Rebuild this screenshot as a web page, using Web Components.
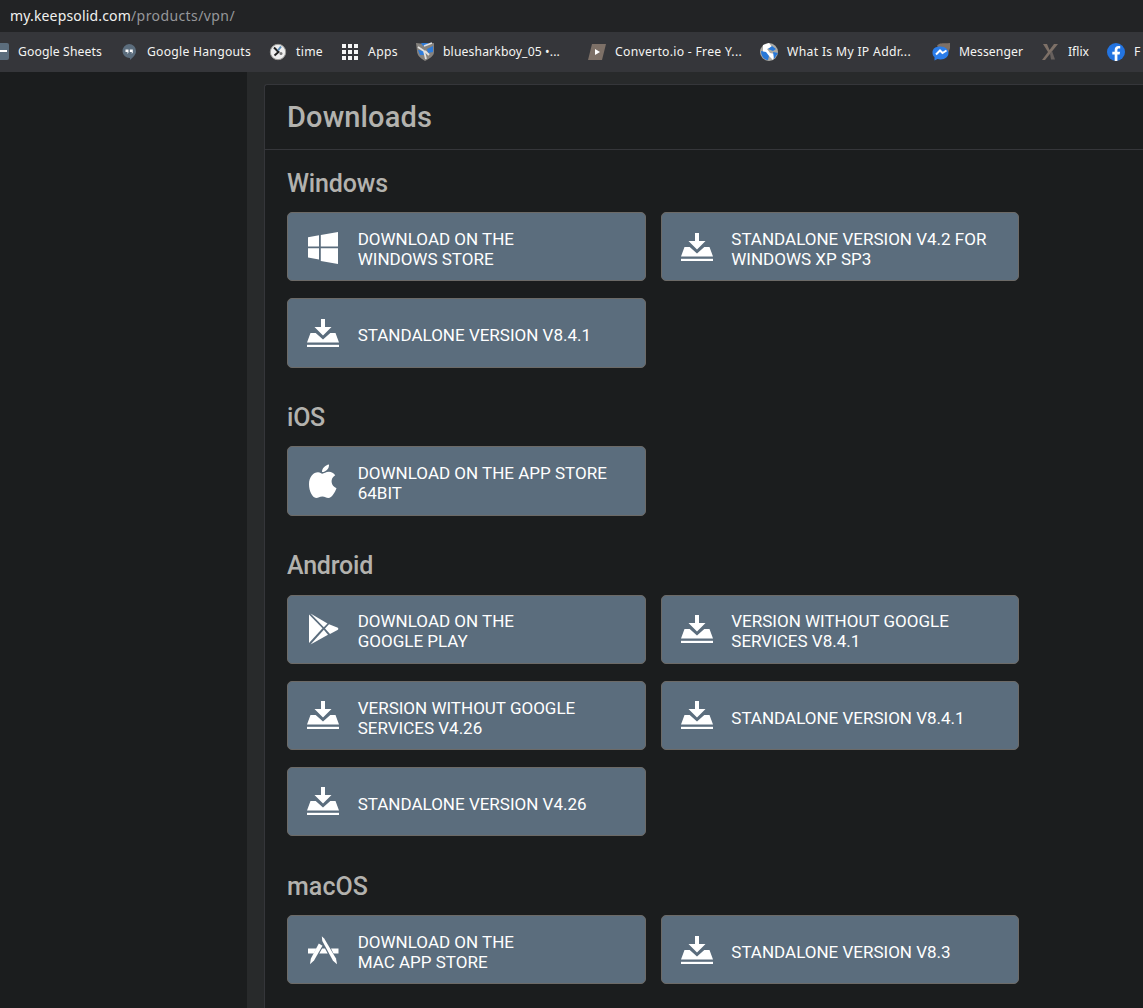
<!DOCTYPE html>
<html lang="en">
<head>
<meta charset="utf-8">
<title>Downloads</title>
<style>
html, body {
  margin: 0;
  height: 100%;
}
body {
  overflow: hidden;
  background: #1b1d1e;
  font-family: Roboto, "Liberation Sans", sans-serif;
}
</style>
</head>
<body>
<app-window></app-window>

<script>
const favicons = {
  sheets: '<rect x="1" y="1" width="17" height="17" rx="2" fill="#5b6d7d"/><path d="M5 9h11" stroke="#fff" stroke-width="2"/>',
  hangouts: '<path d="M9 2a7 7 0 0 1 7 7c0 4-3 6-6 9v-2a7 7 0 1 1-1-14z" fill="#5b6d7d"/><path d="M5.500 7.500h3v3l-1 1.500v-2h-2zM9.800 7.500h3v3l-1 1.500v-2h-2z" fill="#fff"/>',
  clock: '<circle cx="9" cy="10" r="7.700" fill="#eee" stroke="#9a9a96"/><path d="M5 5.500l4.500 4.500-4 3.500" fill="none" stroke="#222" stroke-width="2"/><path d="M9 8.500l3-4" stroke="#5b8db8" stroke-width="2"/><circle cx="12" cy="11.500" r="1.500" fill="#777"/>',
  apps: '<path d="M1 2h4v4H1zM7 2h4v4H7zM13 2h4v4h-4zM1 8h4v4H1zM7 8h4v4H7zM13 8h4v4h-4zM1 14h4v4H1zM7 14h4v4H7zM13 14h4v4h-4z" fill="#f5f5f5"/>',
  shield: '<path d="M0 1l9 1 9-1v9c0 4-4 6-9 9-5-3-8-6-8-10z" fill="#85827e"/><path d="M2 8l6 1v4H4zM11 7l6-3v6l-5 1zM5 1h7l-1 3H7z" fill="#2f7bd8"/><path d="M8 4l8-3M2 5l6 4 2 8M9 9l4 4" stroke="#e2e2e2" stroke-width="1.800" fill="none"/>',
  converto: '<path d="M4 2h14l-4 16H0z" fill="#7d7067"/><path d="M7 7l5 3-5 3z" fill="#fff"/>',
  globe: '<circle cx="9" cy="10" r="9" fill="#aaa9a4"/><path d="M3 3l6-2 3 4-5 2 3 4 5 1-2 6-4-4-6-4z" fill="#fff"/><path d="M1 9l5 1 3 4-1 4C4 18 1 14 1 9zM8 7l4-3 4 3-3 2zM13 10l5 1-4 6z" fill="#2878d8"/>',
  messenger: '<path d="M5 4c2-4 8-2 13-3 1 5-1 9-4 13z" fill="#7d7067"/><path d="M8.500 4.500c5 0 8 3 8 6.500s-3 6.500-8 6.500l-3-.5-3 1.500V15c-1.500-1-2-2.500-2-4.500 0-4 3-6 8-6z" fill="#2b7de9"/><path d="M4 12.500l4-4 2.500 2.500L14.500 8.500" fill="none" stroke="#fff" stroke-width="2"/>',
  iflix: '<path d="M2 2h4l2.500 6L13 2h4L4 18H1l6-8z" fill="#7d7067"/><path d="M9 11.500l2-2.500 3 8.500h-4z" fill="#67605d"/>',
  facebook: '<circle cx="9" cy="10" r="9" fill="#2374e1"/><path d="M7.700 19v-6.500H5.300V9.800h2.400V7.900c0-2.800 1.500-4 3.800-4l1.700.2v2.300h-1.300c-1.200 0-1.500.6-1.500 1.500v1.900h2.700l-.5 2.700h-2.200V19z" fill="#fff"/>'
};

const buttonIcons = {
  windows: '<path d="M2 7.300l11-2v11.200H2zM14.800 5L32 2v14.500H14.800zM2 18.300h11v11.200l-11-2zM14.800 18.300H32V34l-17.200-3z"/>',
  download: '<path d="M15 3h4v8h6.500L17 19.500 8.500 11H15z"/><path d="M4.500 17h5.200l7.300 6.500 7.300-6.500h5.200L33 26.500H1z"/><path d="M1 28.800h32v2.200H1z"/>',
  apple: '<path d="M23 .5c.3 3.500-2.500 7.500-7 7.600C15.700 4.500 19.200 1.100 23 .5z"/><path d="M16.300 9.700c1.600 0 3.600-1.900 6.600-1.900 2.500 0 4.900 1.300 6.300 3.500-5.500 3.200-4.500 10.700 1.300 12.900-1.500 4-4.600 9.600-8.100 9.700-2.500 0-3.300-1.500-6.100-1.500s-3.800 1.500-6.100 1.500C6.400 34 3 27 3 20.300c0-7.500 4.500-12 9-12 2.300 0 3.200 1.400 4.300 1.400z"/>',
  play: '<path d="M3 2.500L16.500 16.300 3 31z"/><path d="M4.500 1.500l17 10-3.700 3.700z"/><path d="M23 12.300l8.300 3.200a1.600 1.600 0 0 1 .2 2.600L24 22l-5-5.500z"/><path d="M17.800 17.800l4.200 5L4.500 32.500z"/>',
  appstore: '<path d="M2 15.500h8.500l-2.800 5H2zM13.300 20.500l2.800-5h2.900l2.700 5zM25 15.500h7.500v5h-5z"/><path d="M12.800 10.500l3.700 2.200L8 27.500l-4 3.700.8-5.500z"/><path d="M15.800 3.200l2.400 2.300L30 25.500l1 5.700-4-3.400L16.300 8z"/>'
};

// icon, label, label width, extra space after the item
const bookmarks = [
  ['sheets', 'Google Sheets', 84, 0],
  ['hangouts', 'Google Hangouts', 104, 0],
  ['clock', 'time', 27, 0],
  ['apps', 'Apps', 30, 0],
  ['shield', 'bluesharkboy_05 •...', 117, 10],
  ['converto', 'Converto.io - Free Y...', 127, 0],
  ['globe', 'What Is My IP Addr...', 124, 3],
  ['messenger', 'Messenger', 64, 0],
  ['iflix', 'Iflix', 21, 0],
  ['facebook', 'F', 7, 0]
];

const sections = [
  ['Windows', 101, [
    ['windows', 'Download on the<br>Windows Store'],
    ['download', 'Standalone version v4.2 for<br>Windows XP SP3'],
    ['download', 'Standalone version v8.4.1']
  ]],
  ['iOS', 38, [
    ['apple', 'Download on the App Store<br>64bit']
  ]],
  ['Android', 86, [
    ['play', 'Download on the<br>Google Play'],
    ['download', 'Version without Google<br>Services v8.4.1'],
    ['download', 'Version without Google<br>Services v4.26'],
    ['download', 'Standalone version v8.4.1'],
    ['download', 'Standalone version v4.26']
  ]],
  ['macOS', 81, [
    ['appstore', 'Download on the<br>Mac App Store'],
    ['download', 'Standalone version v8.3']
  ]]
];

// Text that spreads its letters to fill the width it is given
class FitText extends HTMLElement {
  constructor() {
    super();
    this.attachShadow({ mode: 'open' });
    this.shadowRoot.innerHTML = `
<style>
:host { display: block; white-space: nowrap; flex: none; }
span { display: inline-block; }
</style>
<span><slot></slot></span>`;
  }

  connectedCallback() {
    const width = Number(this.getAttribute('width'));
    const span = this.shadowRoot.querySelector('span');
    const natural = span.getBoundingClientRect().width;
    span.style.letterSpacing = `${(width - natural) / this.textContent.length}px`;
    this.style.width = `${width}px`;
  }
}
customElements.define('fit-text', FitText);

class AddressBar extends HTMLElement {
  constructor() {
    super();
    this.attachShadow({ mode: 'open' });
    this.shadowRoot.innerHTML = `
<style>
:host {
  display: flex;
  align-items: center;
  box-sizing: border-box;
  height: 32px;
  padding: 0 0 1px 10px;
  background: #222325;
  color: #f1f1ef;
  font: 14px/31px "Noto Sans", "Open Sans", sans-serif;
}
.path { color: #96979a; }
</style>
<fit-text width="121">my.keepsolid.com</fit-text>
<fit-text class="path" width="104">/products/vpn/</fit-text>`;
  }
}
customElements.define('address-bar', AddressBar);

class BookmarkItem extends HTMLElement {
  constructor() {
    super();
    this.attachShadow({ mode: 'open' });
  }

  connectedCallback() {
    this.shadowRoot.innerHTML = `
<style>
:host {
  display: flex;
  flex: none;
  align-items: center;
  gap: 9px;
}
svg { flex: none; width: 18px; height: 20px; }
</style>
<svg viewBox="0 0 18 20">${favicons[this.getAttribute('icon')]}</svg>
<slot></slot>`;
  }
}
customElements.define('bookmark-item', BookmarkItem);

class BookmarkBar extends HTMLElement {
  constructor() {
    super();
    this.attachShadow({ mode: 'open' });
  }

  connectedCallback() {
    this.shadowRoot.innerHTML = `
<style>
:host {
  display: flex;
  align-items: center;
  gap: 18px;
  height: 40px;
  margin-left: -9px;
  overflow: hidden;
  background: #35363a;
  color: #f4f4f2;
  font: 12.2px/20px "Noto Sans", "Open Sans", sans-serif;
}
</style>
${bookmarks.map(([icon, label, width, space]) => `
<bookmark-item icon="${icon}" style="margin-right: ${space}px">
  <fit-text width="${width}">${label}</fit-text>
</bookmark-item>`).join('')}`;
  }
}
customElements.define('bookmark-bar', BookmarkBar);

class DownloadButton extends HTMLElement {
  constructor() {
    super();
    this.attachShadow({ mode: 'open' });
  }

  connectedCallback() {
    this.shadowRoot.innerHTML = `
<style>
:host {
  display: flex;
  align-items: center;
  box-sizing: border-box;
  height: 69.4px;
  padding: 2px 18px 0;
  gap: 17.700px;
  border: 1px solid #6c6a67;
  border-radius: 5px;
  background: #5b6d7d;
  color: #fff;
  font-size: 17px;
  line-height: 20px;
  text-transform: uppercase;
  white-space: nowrap;
}
svg { flex: none; width: 34px; height: 36px; fill: #fff; }
div { padding-top: 2.500px; }
</style>
<svg viewBox="0 0 34 36">${buttonIcons[this.getAttribute('icon')]}</svg>
<div><slot></slot></div>`;
  }
}
customElements.define('download-button', DownloadButton);

class PlatformSection extends HTMLElement {
  constructor() {
    super();
    this.attachShadow({ mode: 'open' });
    this.shadowRoot.innerHTML = `
<style>
:host { display: block; padding-bottom: 34.600px; }
h2 {
  margin: 0 0 13.200px;
  font-size: 25px;
  font-weight: 500;
  line-height: 31px;
  color: #b3b2ae;
}
.grid {
  display: grid;
  grid-template-columns: 358.600px 358.600px;
  gap: 16.700px 15px;
}
</style>
<h2><slot name="title"></slot></h2>
<div class="grid"><slot></slot></div>`;
  }
}
customElements.define('platform-section', PlatformSection);

class DownloadsPanel extends HTMLElement {
  constructor() {
    super();
    this.attachShadow({ mode: 'open' });
  }

  connectedCallback() {
    this.shadowRoot.innerHTML = `
<style>
:host {
  display: block;
  box-sizing: border-box;
  border: 1px solid #35363a;
  border-right: 0;
  border-radius: 3px 0 0 0;
  background: #1b1d1e;
}
header {
  box-sizing: border-box;
  height: 65px;
  padding: 14px 0 0 22px;
  border-bottom: 1px solid #35363a;
}
h1 {
  margin: 0;
  font-size: 29px;
  font-weight: 500;
  line-height: 36px;
  color: #b3b2ae;
}
main { padding: 17.900px 0 0 22px; }
</style>
<header><h1><fit-text width="145">Downloads</fit-text></h1></header>
<main>
${sections.map(([title, width, items]) => `
<platform-section>
  <fit-text slot="title" width="${width}">${title}</fit-text>
  ${items.map(([icon, label]) => `<download-button icon="${icon}">${label}</download-button>`).join('')}
</platform-section>`).join('')}
</main>`;
  }
}
customElements.define('downloads-panel', DownloadsPanel);

class AppWindow extends HTMLElement {
  constructor() {
    super();
    this.attachShadow({ mode: 'open' });
    this.shadowRoot.innerHTML = `
<style>
:host {
  display: flex;
  flex-direction: column;
  height: 100vh;
  overflow: hidden;
}
address-bar, bookmark-bar { flex: none; }
.page {
  flex: 1;
  display: grid;
  grid-template-columns: 247px 1fr;
  min-height: 0;
}
.content {
  overflow: hidden;
  padding: 12px 0 0 17px;
  background: #282a2b;
}
downloads-panel { min-height: 940px; }
</style>
<address-bar></address-bar>
<bookmark-bar></bookmark-bar>
<div class="page">
  <aside></aside>
  <div class="content"><downloads-panel></downloads-panel></div>
</div>`;
  }
}
customElements.define('app-window', AppWindow);
</script>
</body>
</html>
